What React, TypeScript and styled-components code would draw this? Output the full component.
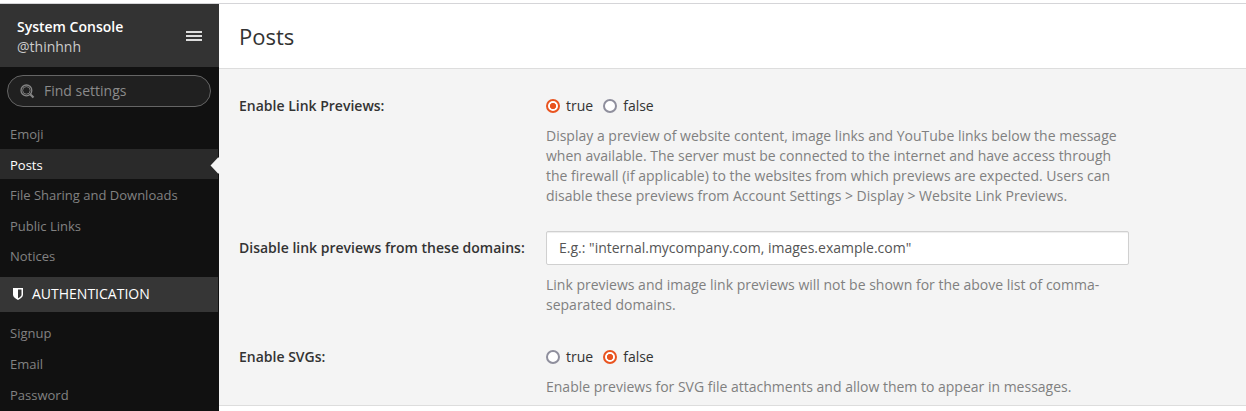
import React from "react";
import styled, { createGlobalStyle, css } from "styled-components";

const GlobalStyle = createGlobalStyle`
  *, *::before, *::after { box-sizing: border-box; }
  html, body { margin: 0; height: 100%; overflow: hidden; background: #fff; }
  body { font: 14px/20px "Open Sans", sans-serif; color: #333; }
`;

const Page = styled.div`
  display: flex;
  flex-direction: column;
  height: 411px;
  overflow: hidden;
`;

const TopRule = styled.div`
  flex: 0 0 4px;
  background: #fff;
  border-bottom: 1px solid #d5d5d8;
`;

const Layout = styled.div`
  display: flex;
  flex: 1;
  min-height: 0;
`;

const Sidebar = styled.aside`
  flex: 0 0 219px;
  background: #111;
  overflow: hidden;
`;

const SidebarHeader = styled.header`
  display: flex;
  align-items: center;
  justify-content: space-between;
  height: 63px;
  padding: 3px 17px 0 17px;
  background: #333;
`;

const Title = styled.div`
  font-weight: 600;
  color: #fff;
`;

const User = styled.div`
  color: #ccc;
`;

const MenuButton = styled.button`
  display: flex;
  flex-direction: column;
  gap: 2px;
  width: 16px;
  padding: 0;
  margin-bottom: 2px;
  border: 0;
  background: none;
`;

const MenuBar = styled.span`
  height: 2px;
  background: #ddd;
`;

const Search = styled.div`
  display: flex;
  align-items: center;
  gap: 9px;
  height: 32px;
  margin: 8px 8px 11px 7px;
  padding: 0 12px;
  border: 1px solid #656565;
  border-radius: 16px;
  background: #202020;
  color: #8b8b8b;
`;

const NavList = styled.nav<{ $top?: number }>`
  padding-top: ${(p) => p.$top ?? 0}px;
`;

const NavItem = styled.a<{ $active?: boolean }>`
  display: block;
  position: relative;
  padding: 7px 10px 5px;
  font-size: 13px;
  line-height: 18.57px;
  color: #828282;
  ${(p) =>
    p.$active &&
    css`
      color: #fff;
      background: linear-gradient(#2a2a2a, #2a2a2a) 0 0 / 218px 100% no-repeat;
    `}
`;

const Arrow = styled.svg`
  position: absolute;
  top: 8px;
  right: 0;
`;

const Category = styled.div`
  display: flex;
  align-items: center;
  gap: 9px;
  width: 218px;
  height: 35px;
  margin-top: 6px;
  padding-left: 13px;
  background: #363636;
  color: #fff;
`;

const Main = styled.main`
  display: flex;
  flex-direction: column;
  flex: 1;
  background: #f4f4f4;
`;

const MainHeader = styled.h1`
  display: flex;
  align-items: center;
  flex: 0 0 65px;
  margin: 0;
  padding: 0 20px 0 20px;
  border-bottom: 1px solid #ddd;
  background: #fff;
  font-size: 22px;
  font-weight: 400;
`;

const Form = styled.form`
  flex: 1;
  min-height: 0;
  padding: 27px 20px 0;
`;

const Setting = styled.div<{ $gap: number }>`
  display: grid;
  grid-template-columns: 307px 583px;
  margin-bottom: ${(p) => p.$gap}px;
`;

const Label = styled.label<{ $top?: number }>`
  padding-top: ${(p) => p.$top ?? 0}px;
  font-weight: 600;
  white-space: nowrap;
`;

const RadioGroup = styled.div`
  display: flex;
  gap: 10px;
`;

const RadioOption = styled.label`
  display: flex;
  align-items: center;
  gap: 6px;
`;

const RadioInput = styled.input`
  appearance: none;
  width: 14px;
  height: 14px;
  margin: 0;
  border: 2px solid #8f8f9d;
  border-radius: 50%;
  background: #fff;
  &:checked {
    border-color: #e95420;
    background: radial-gradient(circle at center, #e95420 2.8px, #fff 3.4px);
  }
`;

const TextInput = styled.input`
  display: block;
  width: 583px;
  height: 34px;
  padding: 5px 12px 7px;
  border: 1px solid #d0d0d0;
  border-radius: 2px;
  background: #fff;
  box-shadow: inset 0 1px 1px rgba(0, 0, 0, 0.075);
  font: inherit;
  &::placeholder { color: #555; opacity: 1; }
`;

const Help = styled.p`
  margin: 10px 0 0;
  color: #808080;
`;

const Footer = styled.footer`
  flex: 0 0 6px;
  border-top: 1px solid #ddd;
  background: #fff;
`;

const SearchIcon = () => (
  <svg width="15" height="15" viewBox="0 0 15 15" fill="none" stroke="#858585">
    <circle cx="6.4" cy="6.4" r="5.4" strokeWidth="1.3" />
    <circle cx="6.4" cy="6.4" r="3.8" strokeWidth="0.9" />
    <path d="M10.2 10.2l3.300 3.300" strokeWidth="2.2" />
  </svg>
);

const ShieldIcon = () => (
  <svg width="10" height="12" viewBox="0 0 10 12">
    <path
      fill="#fff"
      fillRule="evenodd"
      d="M0 0h10v6.8c0 2-2 3.900-5 5.200c-3-1.300-5-3.200-5-5.200zM5 1.600v8.700c2.200-1.100 3.500-2.300 3.500-3.500V1.600z"
    />
  </svg>
);

const BoolChoice = ({ name, value }: { name: string; value: boolean }) => (
  <RadioGroup>
    <RadioOption>
      <RadioInput type="radio" name={name} defaultChecked={value} />
      true
    </RadioOption>
    <RadioOption>
      <RadioInput type="radio" name={name} defaultChecked={!value} />
      false
    </RadioOption>
  </RadioGroup>
);

const siteItems = ["Emoji", "Posts", "File Sharing and Downloads", "Public Links", "Notices"];
const authItems = ["Signup", "Email", "Password"];

export default function App() {
  return (
    <Page>
      <GlobalStyle />
      <TopRule />
      <Layout>
        <Sidebar>
          <SidebarHeader>
            <div>
              <Title>System Console</Title>
              <User>@thinhnh</User>
            </div>
            <MenuButton aria-label="Menu">
              <MenuBar />
              <MenuBar />
              <MenuBar />
            </MenuButton>
          </SidebarHeader>
          <Search>
            <SearchIcon />
            <span>Find settings</span>
          </Search>
          <NavList>
            {siteItems.map((item) => (
              <NavItem key={item} $active={item === "Posts"}>
                {item}
                {item === "Posts" && (
                  <Arrow width="9" height="17" viewBox="0 0 9 17">
                    <path d="M9 0.500H8L0.500 8.500L8 16.500H9z" fill="#f4f4f4" />
                  </Arrow>
                )}
              </NavItem>
            ))}
          </NavList>
          <Category>
            <ShieldIcon />
            <span>AUTHENTICATION</span>
          </Category>
          <NavList $top={5.57}>
            {authItems.map((item) => (
              <NavItem key={item}>{item}</NavItem>
            ))}
          </NavList>
        </Sidebar>
        <Main>
          <MainHeader>Posts</MainHeader>
          <Form>
            <Setting $gap={25}>
              <Label>Enable Link Previews:</Label>
              <div>
                <BoolChoice name="linkPreviews" value={true} />
                <Help>
                  Display a preview of website content, image links and YouTube links below the message when available.
                  The server must be connected to the internet and have access through the firewall (if applicable) to
                  the websites from which previews are expected. Users can disable these previews from Account Settings
                  &gt; Display &gt; Website Link Previews.
                </Help>
              </div>
            </Setting>
            <Setting $gap={32}>
              <Label $top={7}>Disable link previews from these domains:</Label>
              <div>
                <TextInput placeholder={'E.g.: "internal.mycompany.com, images.example.com"'} />
                <Help>
                  Link previews and image link previews will not be shown for the above list of comma-separated domains.
                </Help>
              </div>
            </Setting>
            <Setting $gap={0}>
              <Label>Enable SVGs:</Label>
              <div>
                <BoolChoice name="svgs" value={false} />
                <Help>Enable previews for SVG file attachments and allow them to appear in messages.</Help>
              </div>
            </Setting>
          </Form>
          <Footer />
        </Main>
      </Layout>
    </Page>
  );
}
